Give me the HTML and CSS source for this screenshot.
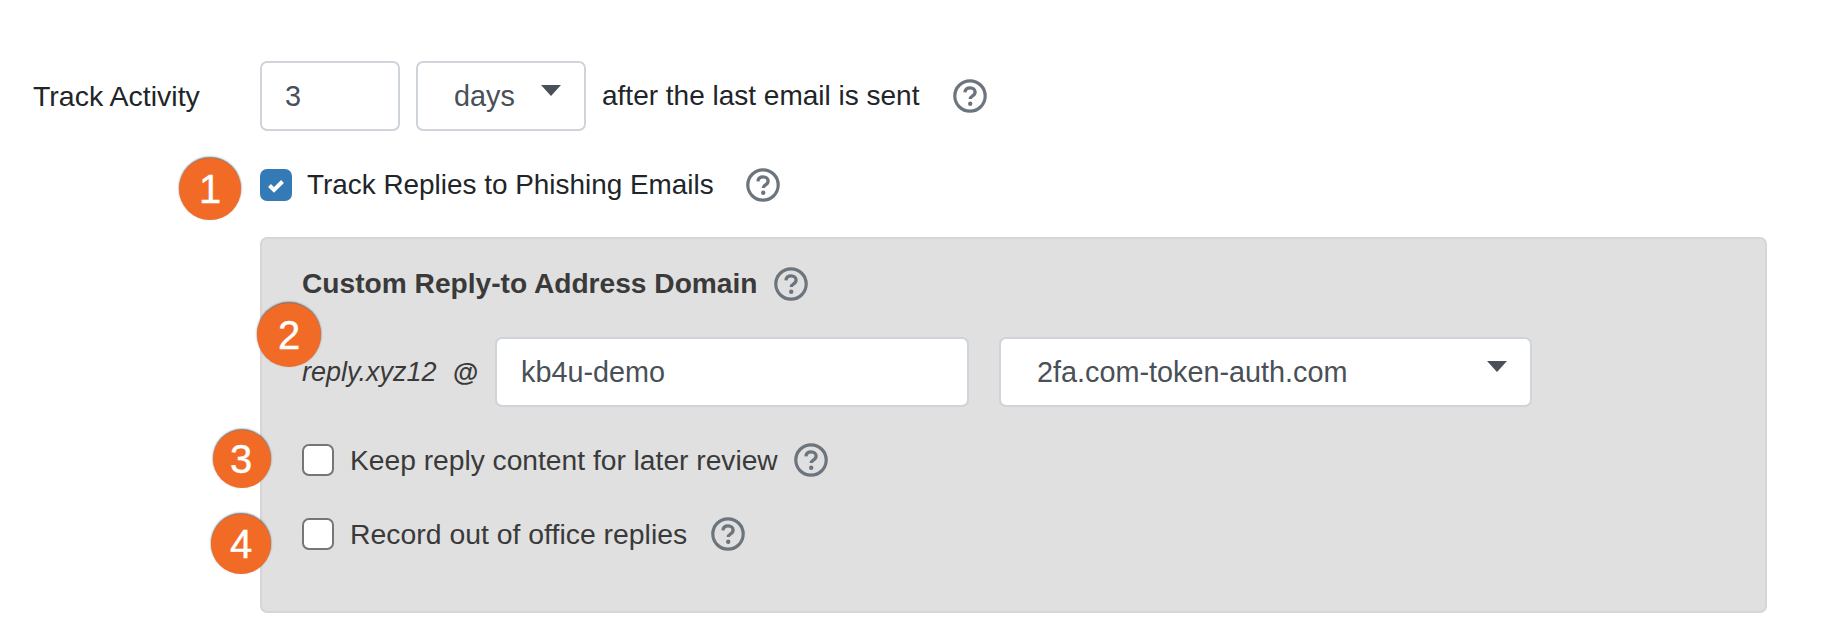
FILE: index.html
```html
<!DOCTYPE html>
<html lang="en">
<head>
<meta charset="utf-8">
<title>Track Activity</title>
<link rel="stylesheet" href="styles.css">
</head>
<body>
<svg class="defs" width="0" height="0" aria-hidden="true">
  <symbol id="help" viewBox="0 0 34 34">
    <circle cx="17" cy="17" r="15.2" fill="none" stroke="currentColor" stroke-width="3.2"/>
    <path d="M11.9 13.4c.3-2.9 2.4-4.5 5.2-4.5 2.9 0 5 1.7 5 4.1 0 1.9-1 2.9-2.5 3.8-1.5.9-2.3 1.6-2.3 3.3" fill="none" stroke="currentColor" stroke-width="3.3"/>
    <circle cx="17.2" cy="24.8" r="2.2" fill="currentColor"/>
  </symbol>
</svg>
<main class="form">
  <div class="row row-activity">
    <label class="row-label">Track Activity</label>
    <input class="field field-num" type="text" value="3">
    <div class="field select select-unit"><span>days</span><i class="caret"></i></div>
    <span class="after">after the last email is sent</span>
    <svg class="help help-activity"><use href="#help"/></svg>
  </div>
  <div class="row row-track">
    <span class="check check-on">
      <svg viewBox="0 0 32 32" width="32" height="32"><path d="M9.5 16.5l4.5 4.5 8.5-8.5" fill="none" stroke="#fff" stroke-width="4"/></svg>
    </span>
    <span class="check-text">Track Replies to Phishing Emails</span>
    <svg class="help help-track"><use href="#help"/></svg>
  </div>
  <section class="panel">
    <div class="panel-title">
      <strong>Custom Reply-to Address Domain</strong>
      <svg class="help help-title"><use href="#help"/></svg>
    </div>
    <div class="address">
      <em class="prefix">reply.xyz12</em>
      <strong class="at">@</strong>
      <input class="field field-local" type="text" value="kb4u-demo">
      <div class="field select select-domain"><span>2fa.com-token-auth.com</span><i class="caret"></i></div>
    </div>
    <div class="option option-keep">
      <span class="check"></span>
      <span class="check-text">Keep reply content for later review</span>
      <svg class="help help-keep"><use href="#help"/></svg>
    </div>
    <div class="option option-ooo">
      <span class="check"></span>
      <span class="check-text">Record out of office replies</span>
      <svg class="help help-ooo"><use href="#help"/></svg>
    </div>
  </section>
  <span class="badge badge-1">1</span>
  <span class="badge badge-2">2</span>
  <span class="badge badge-3">3</span>
  <span class="badge badge-4">4</span>
</main>
</body>
</html>
```
FILE: styles.css
```css
* { box-sizing: border-box; }
html, body { margin: 0; height: 640px; background: #fff; overflow: hidden; }
body { font-family: "Liberation Sans", Arial, sans-serif; font-size: 28px; color: #212529; }
.defs { position: absolute; }
.form { position: relative; width: 1844px; height: 640px; padding-top: 61px; }
.row { display: flex; align-items: center; }
.row-activity { height: 70px; padding-left: 33px; }
.row-label { width: 227px; font-size: 28.5px; }
.field {
  height: 70px;
  border: 2px solid #ced4da;
  border-radius: 7px;
  background: #fff;
  color: #495057;
  font: inherit;
  font-size: 28.8px;
  outline: none;
}
input.field { padding: 0 24px; }
input.field-num { width: 140px; padding: 0 23px; }
.select { position: relative; display: flex; align-items: center; }
.select-unit { width: 170px; margin-left: 16px; padding-left: 36px; }
.after { margin-left: 16px; }
.caret {
  position: absolute;
  top: 22px;
  width: 0;
  height: 0;
  border-left: 10px solid transparent;
  border-right: 10px solid transparent;
  border-top: 11px solid #495057;
}
.select-unit .caret { right: 23px; }
.help { display: block; width: 34px; height: 34px; color: #6c757d; flex: none; }
.help-activity { margin-left: 34px; }
.row-track { height: 32px; margin-top: 38px; padding-left: 260px; }
.row-track .check-text { font-size: 27.9px; }
.check {
  display: block;
  flex: none;
  width: 32px;
  height: 32px;
  border: 2px solid #767676;
  border-radius: 7px;
  background: #fff;
}
.check-on { border: 0; background: #337ab7; }
.check-on svg { display: block; }
.check-text { margin-left: 15px; }
.help-track { margin-left: 32px; }
.panel {
  width: 1507px;
  height: 376px;
  margin: 36px 0 0 260px;
  padding: 28px 40px 0;
  background: #e0e0e0;
  border: 2px solid #d6d6d6;
  border-radius: 7px;
  color: #3a3a3a;
}
.panel-title { display: flex; align-items: center; height: 34px; }
.panel-title strong { font-size: 28.15px; }
.help-title { margin-left: 16px; }
.address { display: flex; align-items: center; height: 70px; margin-top: 36px; }
.prefix { width: 151px; font-size: 27px; }
.at { width: 42px; font-size: 26px; }
.field-local { width: 474px; }
.select-domain { width: 533px; margin-left: 30px; padding-left: 36px; }
.select-domain .caret { right: 23px; }
.option { display: flex; align-items: center; height: 32px; font-size: 28.2px; }
.option .check-text { margin-left: 16px; }
.option-keep { margin-top: 37px; }
.option-ooo { margin-top: 42px; font-size: 28.4px; }
.help-keep { margin-left: 16px; }
.help-ooo { margin-left: 24px; }
.badge {
  position: absolute;
  display: flex;
  align-items: center;
  justify-content: center;
  padding-top: 1px;
  background: #f26b26;
  border-radius: 50%;
  color: #fff;
  font-size: 40px;
  -webkit-text-stroke: .4px #fff;
  box-shadow: 0 -1px 2px rgba(40, 40, 40, .75);
}
.badge-1 { left: 179px; top: 158px; width: 62px; height: 62px; }
.badge-2 { left: 257px; top: 303px; width: 64px; height: 64px; }
.badge-3 { left: 213px; top: 430px; width: 58px; height: 58px; padding-right: 2px; }
.badge-4 { left: 211px; top: 514px; width: 60px; height: 60px; }
```
